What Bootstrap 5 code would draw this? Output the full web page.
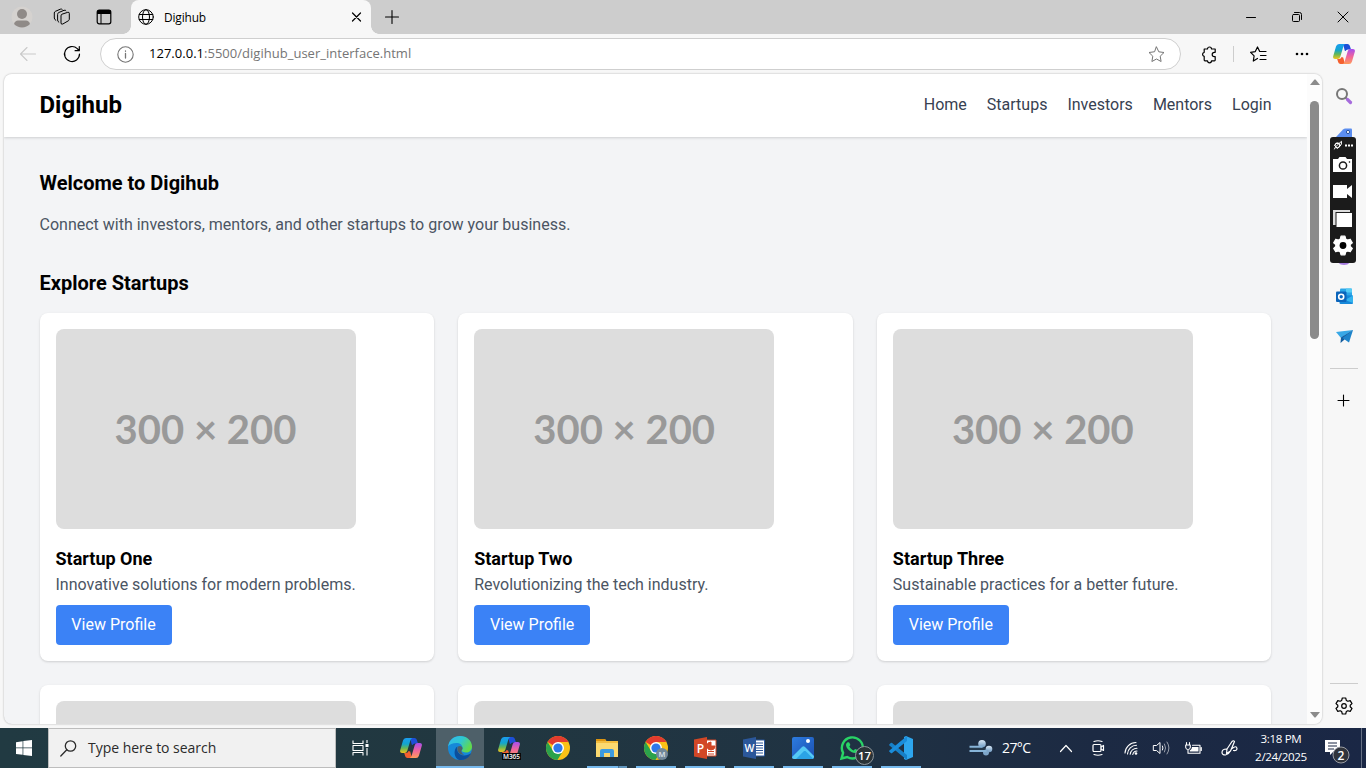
<!DOCTYPE html>
<html lang="en">
<head>
<meta charset="utf-8">
<meta name="viewport" content="width=device-width, initial-scale=1">
<title>Digihub</title>
<link rel="stylesheet" href="https://cdn.jsdelivr.net/npm/bootstrap@5.3.0/dist/css/bootstrap.min.css">
<style>
html,body{height:768px;overflow:hidden}
body{background:#f7f7f7;color:#000;font-family:"Open Sans","Noto Sans",sans-serif;font-size:12px;line-height:1.2}
svg{display:block;flex:none;overflow:visible}
.cell{display:flex;align-items:center;justify-content:center;flex:none}
.ln{fill:none;stroke:currentColor;stroke-linecap:round;stroke-linejoin:round}
/* window chrome */
.tabstrip{height:34px;background:#cdcdcd}
.tab-on{width:240px;height:34px;margin-left:3px;background:#f7f7f7;border-radius:8px 8px 0 0;position:relative;padding:0 9px 0 7px}
.tab-on::before,.tab-on::after{content:"";position:absolute;bottom:0;width:8px;height:8px}
.tab-on::before{left:-8px;background:radial-gradient(circle at 0 0,#cdcdcd 7.5px,#f7f7f7 8px)}
.tab-on::after{right:-8px;background:radial-gradient(circle at 100% 0,#cdcdcd 7.5px,#f7f7f7 8px)}
.tab-title{font-size:11.9px;letter-spacing:-.15px;margin-left:10px}
.toolbar{height:40px}
.omni{width:1081px;height:32px;margin-left:12px;border:1px solid #cfcfcf;border-radius:16px;background:#fff;font-size:13px;color:#757575;padding:0 15px 0 16px}
.omni span{margin-left:15px;letter-spacing:.02px}
.omni b{font-weight:400;color:#000}
.sep{width:1px;height:16px;background:#cdcdcd;margin-left:-3px}
/* page */
.view{height:654px}
.frame{width:1318px;height:650px;margin-left:4px;background:#f3f4f6;border-radius:8px;overflow:hidden;box-shadow:0 0 2px rgba(0,0,0,.32)}
.site{width:1303px;font-family:Roboto,sans-serif;font-size:16px;line-height:24px}
.site-head{background:#fff;height:63px;padding:15px 35.5px 16px;box-shadow:0 1px 3px rgba(0,0,0,.1),0 1px 2px rgba(0,0,0,.06);position:relative}
.site-head nav{gap:20px}
.brand{font-size:24px;line-height:32px;font-weight:700;margin:0}
.site-head a{color:#374151;text-decoration:none}
.site-main{padding:32px 35.5px}
.h-sec{font-size:20px;line-height:28px;font-weight:700;margin:0 0 16px}
.sub{color:#4b5563}
.intro{margin-bottom:32px}
.cards{display:grid;grid-template-columns:repeat(3,1fr);gap:24px}
.s-card{background:#fff;border-radius:8px;padding:16px;height:348px;box-shadow:0 1px 3px rgba(0,0,0,.1),0 1px 2px rgba(0,0,0,.06)}
.ph{width:300px;height:200px;border-radius:8px;background:#ddd;color:#999;font:700 40px/200px Lato,sans-serif;text-align:center;margin-bottom:16px}
.s-card h3{font-size:18px;line-height:28px;font-weight:700;margin:0}
.btn-view{display:block;width:116px;height:40px;line-height:24px;padding:8px 0;border:0;border-radius:4px;background:#3b82f6;color:#fff;font-size:16px;margin-top:8px}
.scroll{width:15px;background:#fcfcfc;color:#8b8b8b;position:relative;z-index:1;padding:5px 0 6px}
.thumb{width:9px;height:238px;border-radius:5px;background:#8b8b8b;margin-top:16px}
/* side rail */
.rail{width:44px;position:relative;padding-top:2px}
.rail .cell{height:40px;width:44px}
.rule{width:28px;height:1px;background:#cdcdcd;margin:0 auto}
.grab{position:absolute;left:8px;top:63px;width:26px;height:126px;background:#1b1b1b;border-radius:3px;color:#fff}
/* taskbar */
.taskbar{height:40px;background:linear-gradient(90deg,#213a42 0,#213740 35%,#203343 60%,#1c2a43 80%,#1a2745 100%);color:#fff}
.find{width:288px;height:40px;background:#f1f1f1;border:1px solid #bdbdbd;color:#2b2b2b;font-size:14px;padding-left:11px}
.find span{margin-left:11px;letter-spacing:-.03px;padding-top:1px}
.app{width:49px;height:40px;padding-right:1px;position:relative}
.app.on{background:linear-gradient(#4e6069,#4e6069) 0 0/48px 40px no-repeat}
.app.run::after{content:"";position:absolute;left:4px;bottom:0;width:40px;height:2px;background:#76b9ed}
.app.on::after{left:0;width:48px}
.app.multi::after{background:linear-gradient(90deg,#76b9ed 31px,#4b7797 31px,#4b7797 32px,#6095bd 32px)}
.temp{font-size:14px;margin-left:9px;letter-spacing:-.6px;width:45px}
.clock{width:60px;text-align:center;font-size:11.6px;line-height:18px;letter-spacing:-.35px}
.s-txt{font-family:"Open Sans",sans-serif;font-weight:600}
</style>
<script src="https://cdn.jsdelivr.net/npm/bootstrap@5.3.0/dist/js/bootstrap.bundle.min.js"></script>
</head>
<body>
<svg width="0" height="0" class="position-absolute" aria-hidden="true">
<defs>
<linearGradient id="cl" x1="0" y1="0" x2="0" y2="1"><stop offset="0" stop-color="#1b9df0"/><stop offset=".4" stop-color="#12a5cf"/><stop offset=".68" stop-color="#65b657"/><stop offset="1" stop-color="#f4c51c"/></linearGradient>
<linearGradient id="cr" x1="0" y1="0" x2="0" y2="1"><stop offset="0" stop-color="#a64ef0"/><stop offset=".5" stop-color="#f0659c"/><stop offset="1" stop-color="#ff9b5b"/></linearGradient>
<linearGradient id="eg" x1="0" y1="0" x2="1" y2=".5"><stop offset="0" stop-color="#35b8ef"/><stop offset=".55" stop-color="#2fc8d0"/><stop offset="1" stop-color="#63d94a"/></linearGradient>
<linearGradient id="ph" x1="0" y1="0" x2="1" y2="1"><stop offset="0" stop-color="#2d7ce0"/><stop offset="1" stop-color="#1b4fb0"/></linearGradient>
<linearGradient id="wd" x1="0" y1="0" x2="0" y2="1"><stop offset="0" stop-color="#d9e8f5"/><stop offset="1" stop-color="#6e9ac3"/></linearGradient>
<symbol id="copilot" viewBox="0 0 22 20"><path d="M10 0h4.500q1.800 0 2.300 1.700L18 5.500h-3q-1.800 0-2.400 1.500l-.8-.3z" fill="#1d4fd8"/><path d="M6 0h6.500Q11 .4 10.500 2L7.300 12.700Q6.600 15 4.500 15H2q-2.500 0-1.800-2.700L3 2.500Q3.700 0 6 0z" fill="url(#cl)"/><path d="M12 20H7.500q-1.800 0-2.300-1.700L4.200 15H6q2 0 2.600-2l1.600.5z" fill="#f4602f"/><path d="M16 20H9.500q1.500-.4 2-2L14.700 7.300Q15.400 5 17.500 5H20q2.500 0 1.800 2.700L19 17.500q-.7 2.500-3 2.500z" fill="url(#cr)"/></symbol>
<symbol id="chrome" viewBox="0 0 24 24"><circle cx="12" cy="12" r="12" fill="#fbc116"/><path d="M12 12 1.600 6A12 12 0 0 1 22.400 6H12z" fill="#e33b2e"/><path d="M1.600 6 7.100 15 12 17.500 17 15 11.400 24A12 12 0 0 1 1.600 6z" fill="#2ba24c"/><circle cx="12" cy="12" r="6" fill="#fff"/><circle cx="12" cy="12" r="4.600" fill="#2f78ea"/></symbol>
<symbol id="gear" viewBox="0 0 18 18"><path d="M7.300 1h3.400l.6 2.400 1.600.9 2.300-.7 1.800 3-1.800 1.600v1.600l1.800 1.700-1.800 2.900-2.300-.7-1.600.9-.6 2.400H7.300l-.6-2.400-1.600-.9-2.300.7L1 11.500l1.800-1.700V8.200L1 6.600l1.800-3 2.300.7 1.600-.9z"/></symbol>
</defs>
</svg>

<div class="tabstrip d-flex align-items-center">
  <div class="cell" style="width:44px"><svg width="22" height="22" viewBox="0 0 22 22"><circle cx="11" cy="11" r="10.500" fill="#d5d2cf"/><circle cx="11" cy="8" r="5" fill="#8f8a87"/><path d="M3 18Q4 14.500 7 14.500h8q3 0 4 3.500A11 11 0 0 1 3 18z" fill="#8f8a87"/></svg></div>
  <div class="cell" style="width:36px"><svg width="18" height="18" viewBox="0 0 18 18" class="ln" stroke-width="1"><path d="M8 7.500Q8 6.500 9 6.200L14.800 4.300Q16.300 4 16.300 5.300v6q0 1-1 1.500l-5.500 3.200Q8 16.700 8 15.300zM5.800 14.200Q4.600 13.600 4.600 12V6.500Q4.600 5 5.800 4.500L11 2.300q1.500-.5 2 .4M2.800 12.300Q1.300 11.500 1.300 10V5q0-1.200 1-1.600L7.300 1.200q1.200-.5 1.900.2"/></svg></div>
  <div class="cell" style="width:48px"><svg width="16" height="16" viewBox="0 0 16 16"><rect x="1.200" y="1.200" width="13.600" height="13.600" rx="2" class="ln" stroke-width="1.200"/><path d="M1 5V3q0-2 2-2h10q2 0 2 2v2z"/><path d="M5 5v9.500" class="ln"/></svg></div>
  <div class="tab-on d-flex align-items-center">
    <svg width="16" height="16" viewBox="0 0 16 16" class="ln" stroke-width="1"><circle cx="8" cy="8" r="7.300"/><ellipse cx="8" cy="8" rx="3.500" ry="7.300"/><path d="M1.300 5.500h13.400M1.300 10.500h13.400"/></svg>
    <span class="tab-title">Digihub</span>
    <svg width="10" height="10" viewBox="0 0 10 10" class="ln ms-auto me-0" stroke-width="1.200"><path d="m.5 1 8 8M8.500 1l-8 8"/></svg>
  </div>
  <div class="cell" style="width:42px"><svg width="14" height="14" viewBox="0 0 14 14" class="ln" stroke-width="1.100"><path d="M7 .5v13M.5 7h13"/></svg></div>
  <div class="d-flex ms-auto">
    <div class="cell" style="width:46px"><svg width="10" height="10" viewBox="0 0 10 10" class="ln"><path d="M.5 5.500h9"/></svg></div>
    <div class="cell" style="width:46px"><svg width="10" height="10" viewBox="0 0 10 10" class="ln"><rect x=".5" y="2.500" width="7" height="7" rx="1"/><path d="M2.500.5h5q2 0 2 2v5"/></svg></div>
    <div class="cell" style="width:46px"><svg width="10" height="10" viewBox="0 0 10 10" class="ln"><path d="m0 0 10 10M10 0 0 10"/></svg></div>
  </div>
</div>

<div class="toolbar d-flex align-items-center">
  <div class="cell" style="width:56px;color:#c9c9c9"><svg width="16" height="14" viewBox="0 0 16 14" class="ln" stroke-width="1.100"><path d="M15.500 7H.5M7 .5.5 7 7 13.500"/></svg></div>
  <div class="cell" style="width:32px"><svg width="16" height="16" viewBox="0 0 16 16" class="ln" stroke-width="1.200"><path d="M15.500 8A7.500 7.500 0 1 1 13.300 2.700L15 4.500M15.300.5v4.200h-4.200"/></svg></div>
  <div class="omni d-flex align-items-center">
    <svg width="17" height="17" viewBox="0 0 17 17" class="ln" stroke-width="1.100"><circle cx="8.500" cy="8.500" r="7.700"/><path d="M8.500 7.500V12M8.500 5v.3" stroke-width="1.300"/></svg>
    <span><b>127.0.0.1</b>:5500/digihub_user_interface.html</span>
    <svg width="17" height="17" viewBox="0 0 17 17" class="ln ms-auto"><path d="m8.500 1 2.300 4.800 5.200.7-3.800 3.700.9 5.300-4.600-2.500-4.600 2.500.9-5.300L1 6.500l5.200-.7z"/></svg>
  </div>
  <div class="cell" style="width:55px;padding-left:1px"><svg width="17" height="17" viewBox="0 0 17 17" class="ln" stroke-width="1.200"><path d="M3.200 3h3.300a2 2 0 0 1 4 0h3.700v3.300h-.8a2.200 2.200 0 0 0 0 4.400h.8V14q0 .8-.8.8h-2.900a2 2 0 0 1-4 0H4q-.8 0-.8-.8v-3.600a2.100 2.100 0 0 1 0-4.100z"/></svg></div>
  <div class="sep"></div>
  <div class="cell" style="width:48px"><svg width="17" height="16" viewBox="0 0 17 16" class="ln" stroke-width="1.200"><path d="M7.500 12.500 3.300 15l.8-5.100L.6 6.300l4.700-.7L7.500 1l2.200 4.500H16M10.500 9.500H16M10 13.500h6"/></svg></div>
  <div class="cell" style="width:40px"><svg width="14" height="4" viewBox="0 0 14 4"><circle cx="2" cy="2" r="1.300"/><circle cx="7" cy="2" r="1.300"/><circle cx="12" cy="2" r="1.300"/></svg></div>
  <div class="cell" style="width:44px"><svg width="22" height="20"><use href="#copilot"/></svg></div>
</div>

<div class="view d-flex">
  <div class="frame d-flex">
    <div class="site">
      <header class="site-head d-flex align-items-center justify-content-between">
        <h1 class="brand">Digihub</h1>
        <nav class="d-flex"><a href="#">Home</a><a href="#">Startups</a><a href="#">Investors</a><a href="#">Mentors</a><a href="#">Login</a></nav>
      </header>
      <main class="site-main">
        <h2 class="h-sec">Welcome to Digihub</h2>
        <p class="sub intro">Connect with investors, mentors, and other startups to grow your business.</p>
        <h2 class="h-sec">Explore Startups</h2>
        <div class="cards">
          <article class="s-card"><div class="ph">300 × 200</div><h3>Startup One</h3><p class="sub mb-0">Innovative solutions for modern problems.</p><button class="btn-view">View Profile</button></article>
          <article class="s-card"><div class="ph">300 × 200</div><h3>Startup Two</h3><p class="sub mb-0">Revolutionizing the tech industry.</p><button class="btn-view">View Profile</button></article>
          <article class="s-card"><div class="ph">300 × 200</div><h3>Startup Three</h3><p class="sub mb-0">Sustainable practices for a better future.</p><button class="btn-view">View Profile</button></article>
          <article class="s-card"><div class="ph"></div></article>
          <article class="s-card"><div class="ph"></div></article>
          <article class="s-card"><div class="ph"></div></article>
        </div>
      </main>
    </div>
    <div class="scroll d-flex flex-column align-items-center">
      <svg width="10" height="6" viewBox="0 0 10 6" fill="#8b8b8b"><path d="M0 6h10L5.500.5h-1z"/></svg>
      <div class="thumb"></div>
      <svg width="10" height="6" viewBox="0 0 10 6" class="mt-auto" fill="#8b8b8b"><path d="M0 0h10L5.500 5.500h-1z"/></svg>
    </div>
  </div>
  <aside class="rail d-flex flex-column">
    <div class="cell"><svg width="16" height="16" viewBox="0 0 16 16" class="ln"><circle cx="6" cy="6" r="5" stroke="#777" stroke-width="2"/><path d="m9.700 9.700 1 1" stroke="#777" stroke-width="2"/><path d="m11.500 11.500 3 3" stroke="#a66bdc" stroke-width="3.200"/></svg></div>
    <div class="cell"><svg width="16" height="16" viewBox="0 0 16 16"><path d="m0 9 7-7.500Q8 .5 9.500.5H15q1 0 1 1V16H6z" fill="#5b8def"/><circle cx="12" cy="4" r="1.600" fill="#fff" stroke="#234e9c"/></svg></div>
    <div class="cell"></div><div class="cell"></div>
    <div class="cell"><svg width="18" height="18" viewBox="0 0 18 18"><circle cx="9" cy="9.500" r="8.600" fill="#a47ade"/></svg></div>
    <div class="cell"><svg width="17" height="17" viewBox="0 0 17 17"><path d="M4 1.500Q4 .5 5 .5h10q1 0 1 1V8H4z" fill="#2aa6e8"/><path d="M10 .5h5q1 0 1 1v3h-6z" fill="#55ccf5"/><path d="M3.500 7 17 7.500V15q0 1-1 1H4.500q-1 0-1-1z" fill="#1688d9"/><path d="m9 12 8-4.500V15z" fill="#34b3ee"/><rect y="3.500" width="10.500" height="10.500" rx="1" fill="#0b65bb"/><circle cx="5.200" cy="8.700" r="2.500" fill="none" stroke="#fff" stroke-width="1.600"/></svg></div>
    <div class="cell"><svg width="17" height="13" viewBox="0 0 17 13"><path d="M0 2 17 0 5 8z" fill="#38a8e6"/><path d="M17 0 5 7.500 4.500 13 8 10z" fill="#145c9d"/><path d="M17 0 6.500 8l6.500 4.500z" fill="#1d83ca"/></svg></div>
    <div class="rule" style="margin-top:12px"></div>
    <div class="cell" style="margin-top:12px"><svg width="12" height="12" viewBox="0 0 12 12" class="ln" stroke-width="1.100"><path d="M5.500 0v11M0 5.500h11"/></svg></div>
    <div class="rule mt-auto"></div>
    <div class="cell" style="height:44px"><svg width="18" height="18" viewBox="0 0 18 18"><use href="#gear" class="ln" stroke-width="1.200"/><circle cx="9" cy="9" r="2.300" class="ln" stroke-width="1.200"/></svg></div>
    <div class="grab d-flex flex-column align-items-center">
      <svg width="26" height="126" viewBox="0 0 26 126"><g class="ln" stroke-width="1"><circle cx="7.500" cy="8.200" r="2.400"/><path d="m4.500 12 1-2M9 6.500l2.500-2.200q.5 3-1.500 5L7 11.500l-1-2 3-3H6L4.500 8.500"/></g><path d="M15 7.500h2v2h-2zm3 0h2v2h-2zm3 0h2v2h-2z" fill="#fff"/>
      <path d="M3 22h5l1.500-2h6l1.500 2h5v13H3z" fill="#fff"/><circle cx="13" cy="28.500" r="3.600" fill="#fff" stroke="#1b1b1b" stroke-width="1.500"/><circle cx="19.500" cy="25" r=".8"/>
      <path d="M3 48h14v4l5-4v13l-5-4v4H3z" fill="#fff"/><path d="M3 73h17v2H5.500v13H3z" fill="#ddd"/><path d="M6.500 76H22v14H6.500z" fill="#fff"/>
      <use href="#gear" x="2.500" y="98" width="21" height="21" fill="#fff" stroke="#fff" stroke-width="1" stroke-linejoin="round"/><circle cx="13" cy="108.500" r="3.400"/></svg>
    </div>
  </aside>
</div>

<footer class="taskbar d-flex">
  <div class="cell" style="width:48px"><svg width="16" height="16" viewBox="0 0 16 16" fill="#fff"><path d="M0 2.200 6.600 1.200v6.400H0zM7.300 1.100 16 0v7.600H7.300zM0 8.300h6.600v6.500L0 13.900zM7.300 8.300H16V16l-8.700-1.100z"/></svg></div>
  <div class="find d-flex align-items-center"><svg width="17" height="17" viewBox="0 0 17 17" class="ln" stroke-width="1.300"><circle cx="10.500" cy="6" r="5.200"/><path d="M6.800 9.800.8 16"/></svg><span>Type here to search</span></div>
  <div class="cell" style="width:51px;padding-right:3px"><svg width="17" height="16" viewBox="0 0 17 16" class="ln" stroke-width="1.100" style="stroke-linecap:butt"><path d="M1 .5v3h10v-3M1 15.500v-3h10v3M1 5.500h10v5H1zM15 0v3M15 8v7.500"/><path d="M13.500 4h3v3h-3z" fill="#fff" stroke="none"/></svg></div>
  <div class="app cell"><svg width="22" height="20"><use href="#copilot"/></svg></div>
  <div class="app cell run on"><svg width="24" height="24" viewBox="0 0 24 24"><circle cx="12" cy="12" r="12" fill="#1688d8"/><path d="M.1 10.500C1 4 6 0 12 0c7 0 12 5 12 10.500 0 4-3 6-6 6-2.500 0-4.500-.8-4.500-1.900 0-.7 1-1.100 1-2.700C14.500 9 12 7 8.500 7 4.500 7 1.300 8.500.1 10.500z" fill="url(#eg)"/><path d="M9.500 10.200c-1.800 4 1.300 9 6.500 9.200 2.800.1 5-1 6.300-1.900.5-.3.800 0 .5.500A12 12 0 0 1 11 23.900C6.500 22.500 4.500 14 9.500 10.200z" fill="#0c4f9c"/><path d="M14.500 12c-.2-1-1-2-2.500-2.100-2 0-2.700 1.300-2.700 3 0 3 3 6 7 6-2-1-3.500-3-2.800-4.300.7-1 1.200-1.500 1-2.600z" fill="#4e6069"/></svg></div>
  <div class="app cell"><svg width="24" height="24" viewBox="0 0 24 24"><use href="#copilot" width="24" height="20" y="1"/><path d="M5 17h19v7H5z" fill="#080808"/><text x="14.500" y="23" text-anchor="middle" font-size="6.500" textLength="17" fill="#fff" class="s-txt">M365</text></svg></div>
  <div class="app cell"><svg width="24" height="24"><use href="#chrome"/></svg></div>
  <div class="app cell run multi"><svg width="22" height="20" viewBox="0 0 22 20"><path d="M0 1h9l1.500 2H22v16H0z" fill="#f4bd3e"/><path d="M0 1h9l1 2H0z" fill="#dc9410"/><path d="M0 5h22v14H0z" fill="#fbd970"/><path d="M4 19v-6q0-2 2-2h10q2 0 2 2v6h-4v-4H8v4z" fill="#3d9be0"/></svg></div>
  <div class="app cell run"><svg width="24" height="24" viewBox="0 0 24 24"><use href="#chrome"/><circle cx="18" cy="18" r="6" fill="#72889a"/><text x="18" y="20.800" text-anchor="middle" font-size="7.500" fill="#dfe6ec" class="s-txt">M</text></svg></div>
  <div class="app cell run"><svg width="22" height="22" viewBox="0 0 22 22"><path d="M11 3h11v16H11z" fill="#fff" stroke="#d24726"/><path d="M17 5v4h4a4 4 0 1 1-4-4zM14 14.500h6M14 17h6" fill="#d24726" stroke="#d24726"/><path d="m0 2.500 13-2.500v22L0 19.500z" fill="#d24726"/><text x="6.500" y="15.500" text-anchor="middle" font-size="12" fill="#fff" class="s-txt" font-weight="700">P</text></svg></div>
  <div class="app cell run"><svg width="22" height="22" viewBox="0 0 22 22"><path d="M11 3h10.500v16H11z" fill="#fff" stroke="#2b579a"/><path d="M13 6h7M13 8.500h7M13 11h7M13 13.500h7M13 16h7" stroke="#2b579a"/><path d="m0 2.500 13-2.500v22L0 19.500z" fill="#2b579a"/><text x="6.500" y="15" text-anchor="middle" font-size="10.500" fill="#fff" class="s-txt">W</text></svg></div>
  <div class="app cell run"><svg width="22" height="22" viewBox="0 0 22 22"><rect width="22" height="22" rx="2" fill="url(#ph)"/><path d="m0 20 10-10q1.500-1.500 3 0l9 9v1q0 2-2 2H2q-2 0-2-2z" fill="#55c9f5"/><path d="m12 14 1.500 0 7.500 7.500-1 .5H4z" fill="#2ba3e5"/><circle cx="16" cy="4" r="2" fill="#fff"/></svg></div>
  <div class="app cell run"><svg width="24" height="24" viewBox="0 0 24 24"><path d="m1.500 22.500 1.600-5.700A10.500 10.500 0 1 1 7.200 21z" fill="none" stroke="#29d366" stroke-width="2.400"/><path d="M8 6.200c.8-.2 1.200 0 1.500.7l.8 1.900c.1.700-.8 1.300-1 1.800 1 1.900 2.300 3 4.300 3.800.7-.4 1.200-1.500 1.700-1.500l2.400 1.200c.6 1.500-1 3-2.700 3-4 0-9-4.700-9-8 0-1.500.9-2.700 2-2.900z" fill="#29d366"/></svg>
    <svg class="position-absolute" style="left:27px;top:18px" width="19" height="19" viewBox="0 0 19 19"><circle cx="9.500" cy="9.500" r="9" fill="#2a3338" stroke="#8e969b"/><text x="9.500" y="13.800" text-anchor="middle" font-size="11.500" fill="#fff" class="s-txt">17</text></svg></div>
  <div class="app cell run"><svg width="24" height="24" viewBox="0 0 24 24"><path d="m17 0 7 3v18l-7 3-2-1V1z" fill="#2da6ee"/><path d="m.2 8.500 1.600-1.500q.7-.5 1.300 0L18 19v5L.4 9.500q-.5-.5-.2-1z" fill="#1780c8"/><path d="m.2 15.500 1.600 1.500q.7.500 1.300 0L18 5V0L.4 14.500q-.5.500-.2 1z" fill="#1a8ddb"/></svg></div>
  <div class="d-flex align-items-center ms-auto">
    <svg width="24" height="18" viewBox="0 0 24 18"><circle cx="13" cy="4.700" r="3.800" fill="url(#wd)"/><circle cx="20" cy="10" r="3.300" fill="url(#wd)"/><circle cx="17" cy="13.500" r="3" fill="#7ea6ca"/><path d="M.5 7.800h13M.5 12h17" stroke="#87b4d8" stroke-width="2"/><path d="M1 9.900h15" stroke="#2a4152" stroke-width="1.200"/></svg>
    <span class="temp">27°C</span>
    <div class="cell" style="width:37px"><svg width="12" height="7" viewBox="0 0 12 7" class="ln" stroke-width="1.200"><path d="m.5 6.500 5.500-6 5.500 6"/></svg></div>
    <div class="cell" style="width:28px"><svg width="13" height="16" viewBox="0 0 13 16" class="ln" stroke-width="1.200"><rect x="1" y="4.500" width="8" height="7" rx="1"/><path d="m9 7 2.500-1.500v5L9 9M2 1.500Q6 0 10 1.500M2 14.500q4 1.500 8 0"/></svg></div>
    <div class="cell" style="width:37px"><svg width="14" height="14" viewBox="0 0 14 14" class="ln" stroke-width="1.100"><path d="M1 12A11 11 0 0 1 12 1.500M3.500 13A9 9 0 0 1 12.500 4.300M6.200 13.300A7 7 0 0 1 13 7.200M8.800 13.500A4.500 4.500 0 0 1 13 10"/><circle cx="12" cy="12.500" r="1.300" fill="#fff" stroke="none"/></svg></div>
    <div class="cell" style="width:25px"><svg width="17" height="14" viewBox="0 0 17 14" class="ln"><path d="M.7 4.500h2.800L7 1.500v11l-3.500-3H.7zM9.500 5q1 2 0 4"/><path d="M11.500 3q2.300 4 0 8M14 1q4 6 0 12" opacity=".55"/></svg></div>
    <div class="cell" style="width:38px"><svg width="17" height="13" viewBox="0 0 17 13" class="ln" stroke-width="1.100"><path d="M1.500.5v2M4.500.5v2M.7 3h4.600v2.500Q5 7.500 3 7.500T.7 5.500zM3 7.500v3.800h12v-8H7.500M16.300 5.500v3"/><path d="M7 5h6.500v4.500H4.800V8.500Q7 7.500 7 5z" fill="#fff" stroke="none"/></svg></div>
    <div class="cell" style="width:35px"><svg width="17" height="16" viewBox="0 0 17 16" class="ln" stroke-width="1.200"><path d="m6 9 5-7.500q1.500-1.500 2.500 0L9.500 11l-4 2.500zM5.500 9Q1 9 1 12.500 1 15 4.500 15 7.500 14.500 9 11.500M11 8.500Q15.500 5 16 8.500q0 2.500-3.500 2"/></svg></div>
    <div class="clock ms-1">3:18 PM<br>2/24/2025</div>
    <svg width="55" height="40" viewBox="0 0 55 40"><path d="M14 12h15v12h-7l-3 3v-3h-5z" fill="#fff"/><path d="M17 15h9M17 18h9M17 21h6" stroke="#1b2744"/><circle cx="30" cy="27" r="8" fill="#30343c" stroke="#9a9da4"/><text x="30" y="31.500" text-anchor="middle" font-size="12" fill="#fff" class="s-txt">2</text><path d="M50.500 0v40" stroke="#667084"/></svg>
  </div>
</footer>
</body>
</html>
